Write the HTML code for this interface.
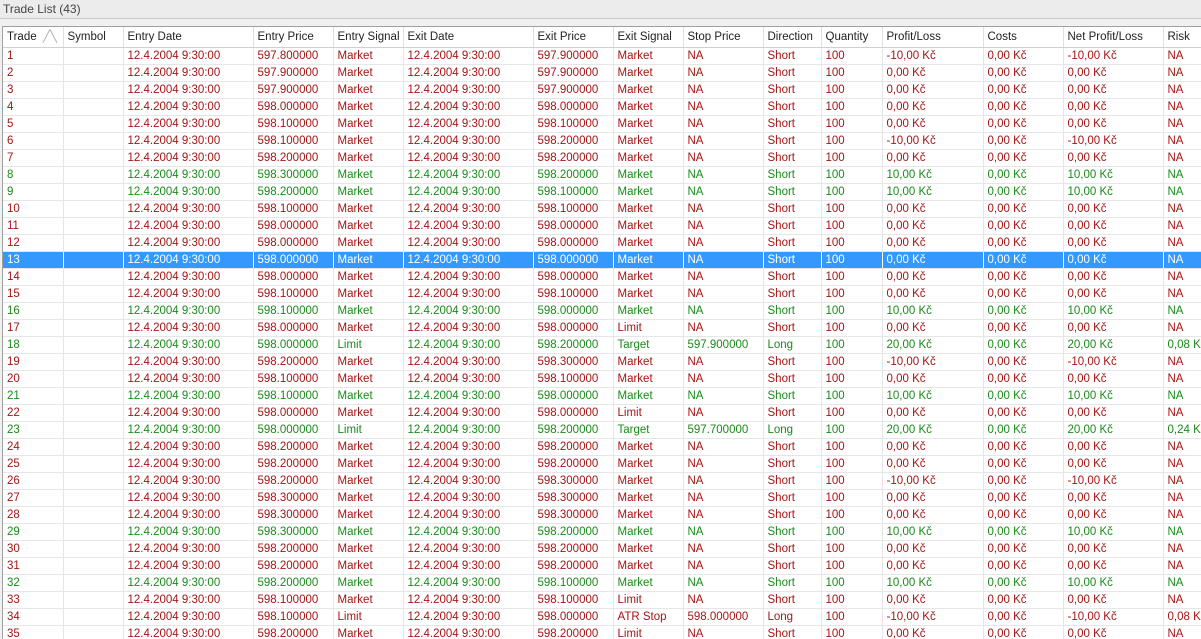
<!DOCTYPE html><html><head><meta charset="utf-8"><style>
body{margin:0;width:1201px;height:638px;overflow:hidden;background:#f0f0f0;font-family:"Liberation Sans",Arial,sans-serif;font-size:11.5px}
.title{position:absolute;left:0;top:0;width:1201px;height:19px;background:#ececec;border-bottom:1px solid #c8c8c8;color:#444;line-height:19px;padding-left:3px;box-sizing:border-box;font-size:12px}
.wrap{position:absolute;left:2px;top:26px;width:1199px;height:612px;overflow:hidden;background:#fff;border-left:1px solid #a0a0a0;border-top:1px solid #a0a0a0}
table{border-collapse:collapse;table-layout:fixed;width:1259px}
td,th{border-right:1px solid #e6e6e6;border-bottom:1px solid #e6e6e6;height:16px;padding:0 0 0 4px;white-space:nowrap;overflow:hidden;font-weight:normal;text-align:left;line-height:16px}
th{height:20px;color:#222;border-right:1px solid #e0e0e0;border-bottom:1px solid #d0d0d0}
tr.r td{color:#a31515}
tr.g td{color:#1a8a1a}
tr.s td{background:#3399ff;color:#fff;border-right:1px solid #fff}
</style></head><body>
<div class="title">Trade List (43)</div>
<div class="wrap"><table>
<colgroup><col style="width:60px"><col style="width:60px"><col style="width:130px"><col style="width:80px"><col style="width:70px"><col style="width:130px"><col style="width:80px"><col style="width:70px"><col style="width:80px"><col style="width:58px"><col style="width:61px"><col style="width:101px"><col style="width:80px"><col style="width:100px"><col style="width:99px"></colgroup>
<tr><th>Trade &nbsp;<span style="color:#aaa">╱╲</span></th><th>Symbol</th><th>Entry Date</th><th>Entry Price</th><th>Entry Signal</th><th>Exit Date</th><th>Exit Price</th><th>Exit Signal</th><th>Stop Price</th><th>Direction</th><th>Quantity</th><th>Profit/Loss</th><th>Costs</th><th>Net Profit/Loss</th><th>Risk</th></tr>
<tr class="r"><td>1</td><td></td><td>12.4.2004 9:30:00</td><td>597.800000</td><td>Market</td><td>12.4.2004 9:30:00</td><td>597.900000</td><td>Market</td><td>NA</td><td>Short</td><td>100</td><td>-10,00 Kč</td><td>0,00 Kč</td><td>-10,00 Kč</td><td>NA</td></tr>
<tr class="r"><td>2</td><td></td><td>12.4.2004 9:30:00</td><td>597.900000</td><td>Market</td><td>12.4.2004 9:30:00</td><td>597.900000</td><td>Market</td><td>NA</td><td>Short</td><td>100</td><td>0,00 Kč</td><td>0,00 Kč</td><td>0,00 Kč</td><td>NA</td></tr>
<tr class="r"><td>3</td><td></td><td>12.4.2004 9:30:00</td><td>597.900000</td><td>Market</td><td>12.4.2004 9:30:00</td><td>597.900000</td><td>Market</td><td>NA</td><td>Short</td><td>100</td><td>0,00 Kč</td><td>0,00 Kč</td><td>0,00 Kč</td><td>NA</td></tr>
<tr class="r"><td>4</td><td></td><td>12.4.2004 9:30:00</td><td>598.000000</td><td>Market</td><td>12.4.2004 9:30:00</td><td>598.000000</td><td>Market</td><td>NA</td><td>Short</td><td>100</td><td>0,00 Kč</td><td>0,00 Kč</td><td>0,00 Kč</td><td>NA</td></tr>
<tr class="r"><td>5</td><td></td><td>12.4.2004 9:30:00</td><td>598.100000</td><td>Market</td><td>12.4.2004 9:30:00</td><td>598.100000</td><td>Market</td><td>NA</td><td>Short</td><td>100</td><td>0,00 Kč</td><td>0,00 Kč</td><td>0,00 Kč</td><td>NA</td></tr>
<tr class="r"><td>6</td><td></td><td>12.4.2004 9:30:00</td><td>598.100000</td><td>Market</td><td>12.4.2004 9:30:00</td><td>598.200000</td><td>Market</td><td>NA</td><td>Short</td><td>100</td><td>-10,00 Kč</td><td>0,00 Kč</td><td>-10,00 Kč</td><td>NA</td></tr>
<tr class="r"><td>7</td><td></td><td>12.4.2004 9:30:00</td><td>598.200000</td><td>Market</td><td>12.4.2004 9:30:00</td><td>598.200000</td><td>Market</td><td>NA</td><td>Short</td><td>100</td><td>0,00 Kč</td><td>0,00 Kč</td><td>0,00 Kč</td><td>NA</td></tr>
<tr class="g"><td>8</td><td></td><td>12.4.2004 9:30:00</td><td>598.300000</td><td>Market</td><td>12.4.2004 9:30:00</td><td>598.200000</td><td>Market</td><td>NA</td><td>Short</td><td>100</td><td>10,00 Kč</td><td>0,00 Kč</td><td>10,00 Kč</td><td>NA</td></tr>
<tr class="g"><td>9</td><td></td><td>12.4.2004 9:30:00</td><td>598.200000</td><td>Market</td><td>12.4.2004 9:30:00</td><td>598.100000</td><td>Market</td><td>NA</td><td>Short</td><td>100</td><td>10,00 Kč</td><td>0,00 Kč</td><td>10,00 Kč</td><td>NA</td></tr>
<tr class="r"><td>10</td><td></td><td>12.4.2004 9:30:00</td><td>598.100000</td><td>Market</td><td>12.4.2004 9:30:00</td><td>598.100000</td><td>Market</td><td>NA</td><td>Short</td><td>100</td><td>0,00 Kč</td><td>0,00 Kč</td><td>0,00 Kč</td><td>NA</td></tr>
<tr class="r"><td>11</td><td></td><td>12.4.2004 9:30:00</td><td>598.000000</td><td>Market</td><td>12.4.2004 9:30:00</td><td>598.000000</td><td>Market</td><td>NA</td><td>Short</td><td>100</td><td>0,00 Kč</td><td>0,00 Kč</td><td>0,00 Kč</td><td>NA</td></tr>
<tr class="r"><td>12</td><td></td><td>12.4.2004 9:30:00</td><td>598.000000</td><td>Market</td><td>12.4.2004 9:30:00</td><td>598.000000</td><td>Market</td><td>NA</td><td>Short</td><td>100</td><td>0,00 Kč</td><td>0,00 Kč</td><td>0,00 Kč</td><td>NA</td></tr>
<tr class="s"><td>13</td><td></td><td>12.4.2004 9:30:00</td><td>598.000000</td><td>Market</td><td>12.4.2004 9:30:00</td><td>598.000000</td><td>Market</td><td>NA</td><td>Short</td><td>100</td><td>0,00 Kč</td><td>0,00 Kč</td><td>0,00 Kč</td><td>NA</td></tr>
<tr class="r"><td>14</td><td></td><td>12.4.2004 9:30:00</td><td>598.000000</td><td>Market</td><td>12.4.2004 9:30:00</td><td>598.000000</td><td>Market</td><td>NA</td><td>Short</td><td>100</td><td>0,00 Kč</td><td>0,00 Kč</td><td>0,00 Kč</td><td>NA</td></tr>
<tr class="r"><td>15</td><td></td><td>12.4.2004 9:30:00</td><td>598.100000</td><td>Market</td><td>12.4.2004 9:30:00</td><td>598.100000</td><td>Market</td><td>NA</td><td>Short</td><td>100</td><td>0,00 Kč</td><td>0,00 Kč</td><td>0,00 Kč</td><td>NA</td></tr>
<tr class="g"><td>16</td><td></td><td>12.4.2004 9:30:00</td><td>598.100000</td><td>Market</td><td>12.4.2004 9:30:00</td><td>598.000000</td><td>Market</td><td>NA</td><td>Short</td><td>100</td><td>10,00 Kč</td><td>0,00 Kč</td><td>10,00 Kč</td><td>NA</td></tr>
<tr class="r"><td>17</td><td></td><td>12.4.2004 9:30:00</td><td>598.000000</td><td>Market</td><td>12.4.2004 9:30:00</td><td>598.000000</td><td>Limit</td><td>NA</td><td>Short</td><td>100</td><td>0,00 Kč</td><td>0,00 Kč</td><td>0,00 Kč</td><td>NA</td></tr>
<tr class="g"><td>18</td><td></td><td>12.4.2004 9:30:00</td><td>598.000000</td><td>Limit</td><td>12.4.2004 9:30:00</td><td>598.200000</td><td>Target</td><td>597.900000</td><td>Long</td><td>100</td><td>20,00 Kč</td><td>0,00 Kč</td><td>20,00 Kč</td><td>0,08 Kč</td></tr>
<tr class="r"><td>19</td><td></td><td>12.4.2004 9:30:00</td><td>598.200000</td><td>Market</td><td>12.4.2004 9:30:00</td><td>598.300000</td><td>Market</td><td>NA</td><td>Short</td><td>100</td><td>-10,00 Kč</td><td>0,00 Kč</td><td>-10,00 Kč</td><td>NA</td></tr>
<tr class="r"><td>20</td><td></td><td>12.4.2004 9:30:00</td><td>598.100000</td><td>Market</td><td>12.4.2004 9:30:00</td><td>598.100000</td><td>Market</td><td>NA</td><td>Short</td><td>100</td><td>0,00 Kč</td><td>0,00 Kč</td><td>0,00 Kč</td><td>NA</td></tr>
<tr class="g"><td>21</td><td></td><td>12.4.2004 9:30:00</td><td>598.100000</td><td>Market</td><td>12.4.2004 9:30:00</td><td>598.000000</td><td>Market</td><td>NA</td><td>Short</td><td>100</td><td>10,00 Kč</td><td>0,00 Kč</td><td>10,00 Kč</td><td>NA</td></tr>
<tr class="r"><td>22</td><td></td><td>12.4.2004 9:30:00</td><td>598.000000</td><td>Market</td><td>12.4.2004 9:30:00</td><td>598.000000</td><td>Limit</td><td>NA</td><td>Short</td><td>100</td><td>0,00 Kč</td><td>0,00 Kč</td><td>0,00 Kč</td><td>NA</td></tr>
<tr class="g"><td>23</td><td></td><td>12.4.2004 9:30:00</td><td>598.000000</td><td>Limit</td><td>12.4.2004 9:30:00</td><td>598.200000</td><td>Target</td><td>597.700000</td><td>Long</td><td>100</td><td>20,00 Kč</td><td>0,00 Kč</td><td>20,00 Kč</td><td>0,24 Kč</td></tr>
<tr class="r"><td>24</td><td></td><td>12.4.2004 9:30:00</td><td>598.200000</td><td>Market</td><td>12.4.2004 9:30:00</td><td>598.200000</td><td>Market</td><td>NA</td><td>Short</td><td>100</td><td>0,00 Kč</td><td>0,00 Kč</td><td>0,00 Kč</td><td>NA</td></tr>
<tr class="r"><td>25</td><td></td><td>12.4.2004 9:30:00</td><td>598.200000</td><td>Market</td><td>12.4.2004 9:30:00</td><td>598.200000</td><td>Market</td><td>NA</td><td>Short</td><td>100</td><td>0,00 Kč</td><td>0,00 Kč</td><td>0,00 Kč</td><td>NA</td></tr>
<tr class="r"><td>26</td><td></td><td>12.4.2004 9:30:00</td><td>598.200000</td><td>Market</td><td>12.4.2004 9:30:00</td><td>598.300000</td><td>Market</td><td>NA</td><td>Short</td><td>100</td><td>-10,00 Kč</td><td>0,00 Kč</td><td>-10,00 Kč</td><td>NA</td></tr>
<tr class="r"><td>27</td><td></td><td>12.4.2004 9:30:00</td><td>598.300000</td><td>Market</td><td>12.4.2004 9:30:00</td><td>598.300000</td><td>Market</td><td>NA</td><td>Short</td><td>100</td><td>0,00 Kč</td><td>0,00 Kč</td><td>0,00 Kč</td><td>NA</td></tr>
<tr class="r"><td>28</td><td></td><td>12.4.2004 9:30:00</td><td>598.300000</td><td>Market</td><td>12.4.2004 9:30:00</td><td>598.300000</td><td>Market</td><td>NA</td><td>Short</td><td>100</td><td>0,00 Kč</td><td>0,00 Kč</td><td>0,00 Kč</td><td>NA</td></tr>
<tr class="g"><td>29</td><td></td><td>12.4.2004 9:30:00</td><td>598.300000</td><td>Market</td><td>12.4.2004 9:30:00</td><td>598.200000</td><td>Market</td><td>NA</td><td>Short</td><td>100</td><td>10,00 Kč</td><td>0,00 Kč</td><td>10,00 Kč</td><td>NA</td></tr>
<tr class="r"><td>30</td><td></td><td>12.4.2004 9:30:00</td><td>598.200000</td><td>Market</td><td>12.4.2004 9:30:00</td><td>598.200000</td><td>Market</td><td>NA</td><td>Short</td><td>100</td><td>0,00 Kč</td><td>0,00 Kč</td><td>0,00 Kč</td><td>NA</td></tr>
<tr class="r"><td>31</td><td></td><td>12.4.2004 9:30:00</td><td>598.200000</td><td>Market</td><td>12.4.2004 9:30:00</td><td>598.200000</td><td>Market</td><td>NA</td><td>Short</td><td>100</td><td>0,00 Kč</td><td>0,00 Kč</td><td>0,00 Kč</td><td>NA</td></tr>
<tr class="g"><td>32</td><td></td><td>12.4.2004 9:30:00</td><td>598.200000</td><td>Market</td><td>12.4.2004 9:30:00</td><td>598.100000</td><td>Market</td><td>NA</td><td>Short</td><td>100</td><td>10,00 Kč</td><td>0,00 Kč</td><td>10,00 Kč</td><td>NA</td></tr>
<tr class="r"><td>33</td><td></td><td>12.4.2004 9:30:00</td><td>598.100000</td><td>Market</td><td>12.4.2004 9:30:00</td><td>598.100000</td><td>Limit</td><td>NA</td><td>Short</td><td>100</td><td>0,00 Kč</td><td>0,00 Kč</td><td>0,00 Kč</td><td>NA</td></tr>
<tr class="r"><td>34</td><td></td><td>12.4.2004 9:30:00</td><td>598.100000</td><td>Limit</td><td>12.4.2004 9:30:00</td><td>598.000000</td><td>ATR Stop</td><td>598.000000</td><td>Long</td><td>100</td><td>-10,00 Kč</td><td>0,00 Kč</td><td>-10,00 Kč</td><td>0,08 Kč</td></tr>
<tr class="r"><td>35</td><td></td><td>12.4.2004 9:30:00</td><td>598.200000</td><td>Market</td><td>12.4.2004 9:30:00</td><td>598.200000</td><td>Limit</td><td>NA</td><td>Short</td><td>100</td><td>0,00 Kč</td><td>0,00 Kč</td><td>0,00 Kč</td><td>NA</td></tr>
</table></div>
</body></html>
